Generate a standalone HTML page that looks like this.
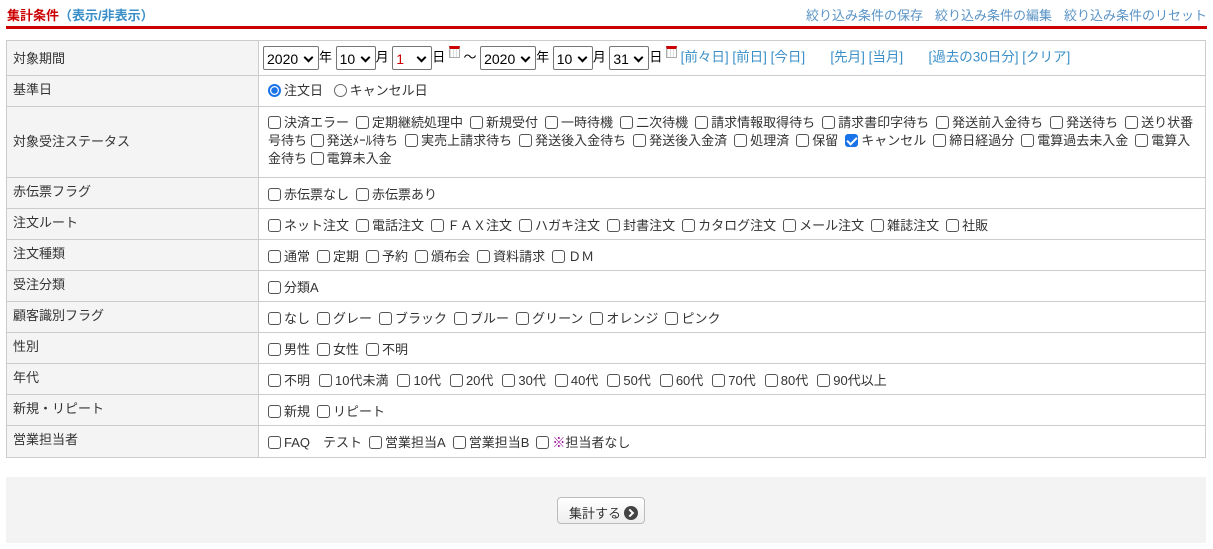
<!DOCTYPE html>
<html><head><meta charset="utf-8">
<style>
*{box-sizing:border-box;margin:0;padding:0}
body{width:1213px;height:549px;background:#fff;font-family:"Liberation Sans","Noto Sans CJK JP",sans-serif;font-size:13px;color:#333;position:relative;overflow:hidden}
.hdr{position:absolute;left:7px;top:5px;font-size:13px;font-weight:bold;color:#c00}
.hdr a{color:#3a8fc8}
.links{position:absolute;right:6px;top:5px;color:#5a93c5;font-size:13px}
.links span{margin-left:12px}
.rl{position:absolute;left:6px;top:26px;width:1201px;height:3px;background:#c00}
table{position:absolute;left:6px;top:40px;width:1200px;border-collapse:collapse}
td{border:1px solid #ccc;vertical-align:top}
td.l{width:252px;background:#f3f4f3;padding:3px 0 0 6px}
td.v{padding:8px 0 0 9px;line-height:18px}
.cb{display:inline-block;width:13px;height:13px;border:1px solid #555;border-radius:3px;vertical-align:-2px;margin-right:3px;background:#fff}
.cb.on{background:#1a73e8;border-color:#1a73e8;position:relative}
.cb.on:after{content:"";position:absolute;left:3px;top:0px;width:4px;height:8px;border:solid #fff;border-width:0 2px 2px 0;transform:rotate(45deg)}
.rd{display:inline-block;width:13px;height:13px;border:1px solid #666;border-radius:50%;vertical-align:-2px;margin-right:3px}
.rd.on{border:2px solid #1a73e8;background:radial-gradient(#1a73e8 3px,#fff 3.5px)}
.i{margin-right:7px;white-space:nowrap}
.age .i{margin-right:9px}
.sel{display:inline-block;height:24px;border:1px solid #767676;border-radius:2px;padding:3px 0 0 3px;font-size:14px;color:#000;position:relative;vertical-align:middle}
.sel:after{content:"";position:absolute;right:6px;top:7px;width:5px;height:5px;border:solid #000;border-width:0 2px 2px 0;transform:rotate(45deg)}
.cal{display:inline-block;width:11px;height:12px;border:1px solid #aaa;border-top:3px solid #c00;vertical-align:3px;background:repeating-linear-gradient(90deg,#ddd 0 1px,#fff 1px 3px)}
.lk{color:#3a8fc8;font-size:13.5px}
.foot{position:absolute;left:6px;top:477px;width:1200px;height:66px;background:#f3f3f3}
.btn{position:absolute;left:551px;top:20px;width:88px;height:27px;border:1px solid #bbb;border-radius:4px;background:linear-gradient(#fff,#eee);font-size:13px;color:#333;padding:5px 0 0 11px}
.btn i{display:inline-block;width:14px;height:14px;border-radius:50%;background:#444;vertical-align:-2px;margin-left:3px;position:relative}
.btn i:after{content:"";position:absolute;left:3px;top:4px;width:4px;height:4px;border:solid #fff;border-width:2px 2px 0 0;transform:rotate(45deg)}
</style></head><body>
<div class="hdr">集計条件<a>（表示/非表示）</a></div>
<div class="links"><span>絞り込み条件の保存</span><span>絞り込み条件の編集</span><span>絞り込み条件のリセット</span></div>
<div class="rl"></div>
<table>
<tr style="height:35px"><td class="l" style="padding-top:7px">対象期間</td><td class="v" style="padding:5px 0 0 4px;color:#000"><span class="sel" style="width:56px">2020</span>年 <span class="sel" style="width:40px">10</span>月 <span class="sel" style="width:40px;color:#c00">1</span>日 <span class="cal"></span> ～ <span class="sel" style="width:56px">2020</span>年 <span class="sel" style="width:40px">10</span>月 <span class="sel" style="width:40px">31</span>日 <span class="cal"></span> <span class="lk">[前々日] [前日] [今日]</span>&nbsp;&nbsp;&nbsp;&nbsp;&nbsp;&nbsp;&nbsp;<span class="lk">[先月] [当月]</span>&nbsp;&nbsp;&nbsp;&nbsp;&nbsp;&nbsp;&nbsp;<span class="lk">[過去の30日分] [クリア]</span></td></tr>
<tr style="height:31px"><td class="l">基準日</td><td class="v" style="padding-top:6px"><span class="i"><span class="rd on"></span>注文日</span> <span class="i"><span class="rd"></span>キャンセル日</span></td></tr>
<tr style="height:71px"><td class="l" style="padding-top:24px">対象受注ステータス</td><td class="v" style="padding-top:7px"><span class="i"><span class="cb"></span>決済エラー</span><span class="i"><span class="cb"></span>定期継続処理中</span><span class="i"><span class="cb"></span>新規受付</span><span class="i"><span class="cb"></span>一時待機</span><span class="i"><span class="cb"></span>二次待機</span><span class="i"><span class="cb"></span>請求情報取得待ち</span><span class="i"><span class="cb"></span>請求書印字待ち</span><span class="i"><span class="cb"></span>発送前入金待ち</span><span class="i"><span class="cb"></span>発送待ち</span><span class="cb"></span>送り状番<br>号待ち <span class="i"><span class="cb"></span>発送ﾒｰﾙ待ち</span><span class="i"><span class="cb"></span>実売上請求待ち</span><span class="i"><span class="cb"></span>発送後入金待ち</span><span class="i"><span class="cb"></span>発送後入金済</span><span class="i"><span class="cb"></span>処理済</span><span class="i"><span class="cb"></span>保留</span><span class="i"><span class="cb on"></span>キャンセル</span><span class="i"><span class="cb"></span>締日経過分</span><span class="i"><span class="cb"></span>電算過去未入金</span><span class="cb"></span>電算入<br>金待ち <span class="i"><span class="cb"></span>電算未入金</span></td></tr>
<tr style="height:31px"><td class="l">赤伝票フラグ</td><td class="v"><span class="i"><span class="cb"></span>赤伝票なし</span><span class="i"><span class="cb"></span>赤伝票あり</span></td></tr>
<tr style="height:31px"><td class="l">注文ルート</td><td class="v"><span class="i"><span class="cb"></span>ネット注文</span><span class="i"><span class="cb"></span>電話注文</span><span class="i"><span class="cb"></span>ＦＡＸ注文</span><span class="i"><span class="cb"></span>ハガキ注文</span><span class="i"><span class="cb"></span>封書注文</span><span class="i"><span class="cb"></span>カタログ注文</span><span class="i"><span class="cb"></span>メール注文</span><span class="i"><span class="cb"></span>雑誌注文</span><span class="i"><span class="cb"></span>社販</span></td></tr>
<tr style="height:31px"><td class="l">注文種類</td><td class="v"><span class="i"><span class="cb"></span>通常</span><span class="i"><span class="cb"></span>定期</span><span class="i"><span class="cb"></span>予約</span><span class="i"><span class="cb"></span>頒布会</span><span class="i"><span class="cb"></span>資料請求</span><span class="i"><span class="cb"></span>ＤＭ</span></td></tr>
<tr style="height:31px"><td class="l">受注分類</td><td class="v"><span class="i"><span class="cb"></span>分類A</span></td></tr>
<tr style="height:31px"><td class="l">顧客識別フラグ</td><td class="v"><span class="i"><span class="cb"></span>なし</span><span class="i"><span class="cb"></span>グレー</span><span class="i"><span class="cb"></span>ブラック</span><span class="i"><span class="cb"></span>ブルー</span><span class="i"><span class="cb"></span>グリーン</span><span class="i"><span class="cb"></span>オレンジ</span><span class="i"><span class="cb"></span>ピンク</span></td></tr>
<tr style="height:31px"><td class="l">性別</td><td class="v"><span class="i"><span class="cb"></span>男性</span><span class="i"><span class="cb"></span>女性</span><span class="i"><span class="cb"></span>不明</span></td></tr>
<tr style="height:31px"><td class="l">年代</td><td class="v age"><span class="i"><span class="cb"></span>不明</span><span class="i"><span class="cb"></span>10代未満</span><span class="i"><span class="cb"></span>10代</span><span class="i"><span class="cb"></span>20代</span><span class="i"><span class="cb"></span>30代</span><span class="i"><span class="cb"></span>40代</span><span class="i"><span class="cb"></span>50代</span><span class="i"><span class="cb"></span>60代</span><span class="i"><span class="cb"></span>70代</span><span class="i"><span class="cb"></span>80代</span><span class="i"><span class="cb"></span>90代以上</span></td></tr>
<tr style="height:31px"><td class="l">新規・リピート</td><td class="v"><span class="i"><span class="cb"></span>新規</span><span class="i"><span class="cb"></span>リピート</span></td></tr>
<tr style="height:32px"><td class="l">営業担当者</td><td class="v"><span class="i"><span class="cb"></span>FAQ　テスト</span><span class="i"><span class="cb"></span>営業担当A</span><span class="i"><span class="cb"></span>営業担当B</span><span class="i"><span class="cb"></span><span style="color:#909">※</span>担当者なし</span></td></tr>
</table>
<div class="foot"><div class="btn">集計する<i></i></div></div>
</body></html>
